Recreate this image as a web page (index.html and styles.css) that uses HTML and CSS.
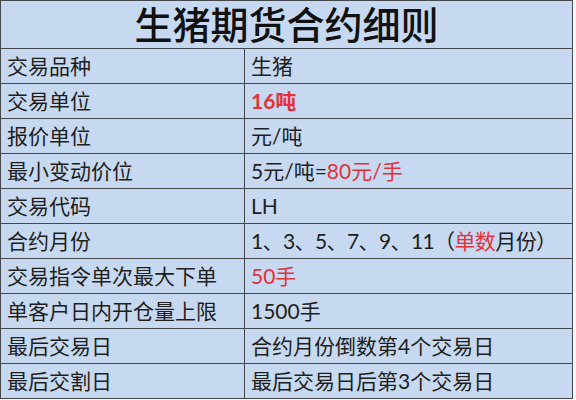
FILE: index.html
```html
<!DOCTYPE html>
<html lang="zh-CN">
<head>
<meta charset="utf-8">
<title>生猪期货合约细则</title>
<link rel="stylesheet" href="styles.css">
</head>
<body>
<table class="spec">
  <colgroup><col class="col-k"><col class="col-v"></colgroup>
  <tr class="title-row"><th colspan="2">生猪期货合约细则</th></tr>
  <tr><td>交易品种</td><td>生猪</td></tr>
  <tr><td>交易单位</td><td><span class="red bold">16吨</span></td></tr>
  <tr><td>报价单位</td><td>元/吨</td></tr>
  <tr><td>最小变动价位</td><td>5元/吨=<span class="red">80元/手</span></td></tr>
  <tr><td>交易代码</td><td>LH</td></tr>
  <tr><td>合约月份</td><td class="compact">1、3、5、7、9、11（<span class="red">单数</span>月份）</td></tr>
  <tr><td>交易指令单次最大下单</td><td><span class="red">50手</span></td></tr>
  <tr><td>单客户日内开仓量上限</td><td>1500手</td></tr>
  <tr><td>最后交易日</td><td>合约月份倒数第4个交易日</td></tr>
  <tr><td>最后交割日</td><td>最后交易日后第3个交易日</td></tr>
</table>
</body>
</html>
```
FILE: styles.css
```css
html, body {
  margin: 0;
  padding: 0;
  background: #f4f5f7;
}
.spec {
  border-collapse: collapse;
  width: 573px;
  background: #c6d9f0;
  font-family: Lato, "Noto Sans CJK SC", sans-serif;
  color: #1e1e1e;
  table-layout: fixed;
}
.col-k { width: 244px; }
.spec th, .spec td {
  border: 1px solid #45484d;
  padding: 0 0 0 6px;
  text-align: left;
  white-space: nowrap;
  overflow: hidden;
}
.title-row th {
  height: 47px;
  text-align: center;
  padding: 0;
  font-size: 38px;
  font-weight: 500;
  color: #111;
  line-height: 47px;
}
.spec td {
  height: 34px;
  font-size: 21px;
  line-height: 34px;
}
.spec td.compact { letter-spacing: -0.6px; }
.red { color: #e0323c; }
.bold { font-weight: 700; }
```
